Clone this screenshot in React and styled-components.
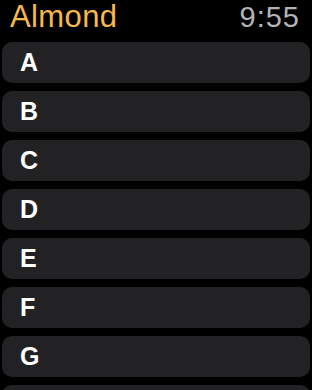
import React from "react";
import styled, { createGlobalStyle } from "styled-components";

const Global = createGlobalStyle`
  html, body { margin: 0; padding: 0; background: #000; }
  body { font-family: "Liberation Sans", Arial, sans-serif; overflow: hidden; }
`;

const Screen = styled.div`
  width: 312px;
  height: 390px;
  background: #000;
  overflow: hidden;
`;

const Header = styled.header`
  height: 42px;
  display: flex;
  justify-content: space-between;
  align-items: flex-start;
  padding: 0 12px 0 10px;
  box-sizing: border-box;
`;

const Title = styled.div`
  color: #f8b94c;
  font-size: 31px;
  line-height: 34px;
  font-weight: 400;
  letter-spacing: 0.4px;
`;

const Clock = styled.div`
  color: #b4b4b8;
  font-size: 29px;
  line-height: 34px;
  letter-spacing: 1px;
`;

const List = styled.div`
  display: flex;
  flex-direction: column;
  gap: 8px;
  padding: 0 2px;
`;

const Row = styled.div`
  height: 41px;
  flex-shrink: 0;
  border-radius: 10px;
  background: #222224;
  display: flex;
  align-items: center;
  padding-left: 18px;
  color: #fff;
  font-size: 25px;
  font-weight: 700;
`;

const letters = ["A", "B", "C", "D", "E", "F", "G", "H"];

export default function App() {
  return (
    <Screen>
      <Global />
      <Header>
        <Title>Almond</Title>
        <Clock>9:55</Clock>
      </Header>
      <List>
        {letters.map((l) => (
          <Row key={l}>{l}</Row>
        ))}
      </List>
    </Screen>
  );
}
